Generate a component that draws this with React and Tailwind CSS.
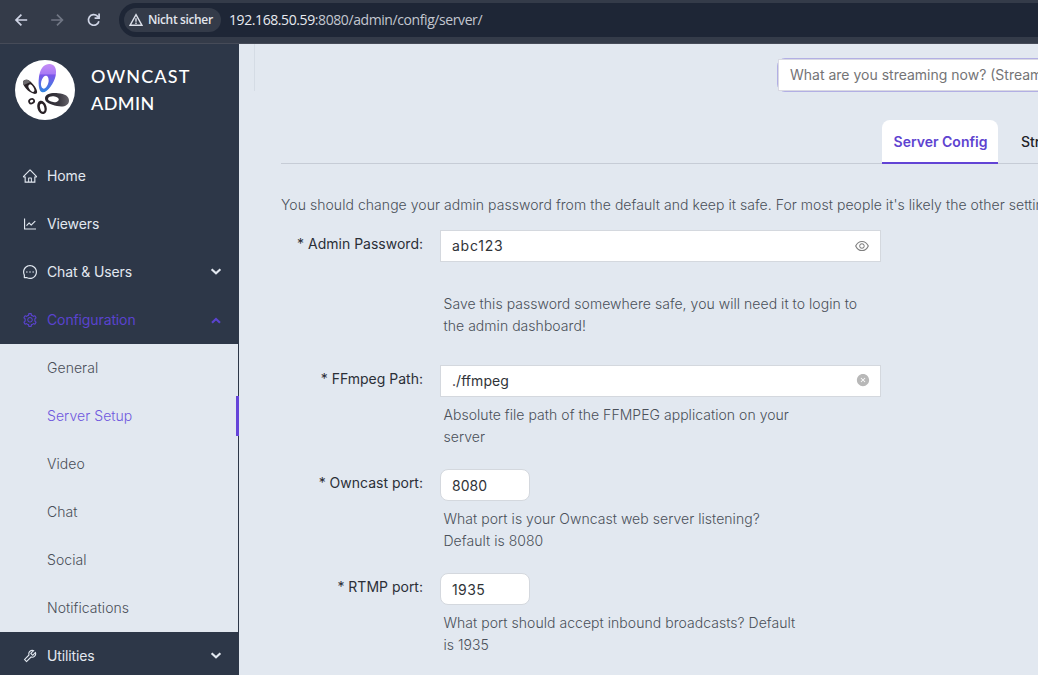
import {
  AiOutlineHome,
  AiOutlineLineChart,
  AiOutlineMessage,
  AiOutlineSetting,
  AiOutlineTool,
  AiOutlineEye,
  AiFillCloseCircle,
} from "react-icons/ai";

function BrowserBar() {
  return (
    <header className="flex h-11 shrink-0 items-start border-b border-[#464b58] bg-[#343b49] pt-[3px]">
      <div className="flex h-[34px] w-[119px] shrink-0 items-center pl-[14px]">
        <svg className="h-4 w-4 shrink-0" viewBox="0 0 16 16" fill="none" stroke="#cfd5e6" strokeWidth="1.7">
          <path d="M13.2 8H2.2M7.4 2.6 2 8l5.4 5.4" />
        </svg>
        <svg className="ml-5 h-4 w-4 shrink-0" viewBox="0 0 16 16" fill="none" stroke="#707684" strokeWidth="1.7">
          <path d="M1.2 8h11M7 2.6 12.4 8 7 13.4" />
        </svg>
        <svg className="ml-5 h-4 w-4 shrink-0" viewBox="0 0 16 16" fill="none" stroke="#cfd5e6" strokeWidth="1.7">
          <path d="M12.9 9.2A5.3 5.3 0 1 1 11.4 4.1L12.6 5.4" />
          <path d="M13.1 1.6v4.5H8.6" />
        </svg>
      </div>
      <div className="flex h-[34px] flex-1 items-center rounded-l-full bg-[#1e2636] pl-[5px]">
        <div className="flex h-6 w-[97px] items-center rounded-full bg-[#343b49] pl-[5px]">
          <svg className="h-[14px] w-[14px] shrink-0" viewBox="0 0 14 14" fill="none" stroke="#dce0ea" strokeWidth="1.4">
            <path d="M7 1.6 13 12.3H1Z" />
            <path d="M7 5.2v3.6M7 9.6v1.4" />
          </svg>
          <span className="ml-[5px] whitespace-nowrap font-['Open_Sans',sans-serif] text-[12px] leading-4 font-semibold tracking-[-0.36px] text-[#e3e6ee]">
            Nicht sicher
          </span>
        </div>
        <span className="ml-2 whitespace-nowrap font-['Open_Sans',sans-serif] text-[14px] leading-5 tracking-[-0.41px] text-[#c3c7d0]">
          <span className="text-[#e8eaf0]">192.168.50.59</span>:8080/admin/config/server/
        </span>
      </div>
    </header>
  );
}

function Logo() {
  return (
    <svg className="h-[60px] w-[60px] shrink-0" viewBox="0 0 60 60">
      <defs>
        <linearGradient id="petal" x1="0" y1="0" x2="0" y2="1">
          <stop offset="0" stopColor="#c58cf6" />
          <stop offset=".36" stopColor="#a87af5" />
          <stop offset=".38" stopColor="#7e55ea" />
          <stop offset="1" stopColor="#2f86df" />
        </linearGradient>
        <linearGradient id="ink" x1="0" y1="0" x2="1" y2="0">
          <stop offset="0" stopColor="#25222a" />
          <stop offset=".6" stopColor="#3d3b43" />
          <stop offset="1" stopColor="#66646b" />
        </linearGradient>
      </defs>
      <circle cx="30" cy="30" r="30" fill="#fff" />
      <path d="M27.5 32.3C23.4 32 22.8 22 24.5 14C26.2 7 30 3.6 35 4C40.6 4.6 42 10 40.6 16C39 23 32.5 32.8 27.5 32.3Z" fill="url(#petal)" />
      <ellipse cx="29.8" cy="22.2" rx="3.6" ry="6.6" transform="rotate(14 29.8 22.2)" fill="#fff" />
      <path d="M21.5 33.5C18 35.6 9.4 29 8 23.6C7.4 20.6 10 18.9 13 20C17.6 22 24.4 31.8 21.5 33.5Z" fill="#292126" />
      <path d="M8 23.6C7.4 20.6 10 18.9 13 20L15.5 22L8.8 25Z" fill="#6c696c" />
      <ellipse cx="16.4" cy="28.2" rx="2.2" ry="4.2" transform="rotate(-32 16.4 28.2)" fill="#fff" />
      <path d="M30 38.5C30 34 36 32.6 43 33.2C50 33.6 54.4 36.5 54 41C53.6 45.7 48.6 47.4 42 46C35.5 44.6 30 42.5 30 38.5Z" fill="url(#ink)" />
      <ellipse cx="38.4" cy="39.2" rx="5.4" ry="2.9" transform="rotate(6 38.4 39.2)" fill="#fff" />
      <ellipse cx="27" cy="47.4" rx="4.6" ry="6.8" transform="rotate(-16 27 47.4)" fill="#292126" />
      <ellipse cx="27.2" cy="47.8" rx="2.1" ry="4.1" transform="rotate(-14 27.2 47.8)" fill="#fff" />
      <ellipse cx="16.6" cy="41.2" rx="2.6" ry="2.2" transform="rotate(-30 16.6 41.2)" fill="#fff" stroke="#292126" strokeWidth="1.7" />
    </svg>
  );
}

function Arrow({ up }) {
  return (
    <svg className="ml-auto h-3 w-3 shrink-0" viewBox="0 0 12 12" fill="none" stroke="currentColor" strokeWidth="2.2">
      <path d={up ? "M2 8.8 6 5l4 3.8" : "M1.6 3.2 6 7.2l4.4-4"} />
    </svg>
  );
}

function MenuItem({ icon: Icon, label, arrow, active }) {
  return (
    <div className={"flex h-12 items-center pr-[17px] pl-[22px] " + (active ? "text-[#5a43cf]" : "text-[#e2e8f0]")}>
      <Icon className="h-4 w-4 shrink-0" />
      <span className="ml-[9px] pb-[2px] text-[14px] tracking-[-0.12px]">{label}</span>
      {arrow && <Arrow up={arrow === "up"} />}
    </div>
  );
}

function SubItem({ label, active }) {
  return (
    <div className={"flex h-12 items-center justify-between pl-[47px] text-[14px] font-light " + (active ? "text-[#6f58de]" : "text-[#4a4f58]")}>
      <span className="pb-[2px] tracking-[0.06px]">{label}</span>
      {active && <span className="-mr-px h-10 w-[3px] bg-[#6544d9]" />}
    </div>
  );
}

function Sidebar() {
  return (
    <aside className="flex w-[239px] shrink-0 flex-col bg-[#2d3748]">
      <div className="flex h-[108px] shrink-0 items-start pt-4 pl-[15px]">
        <Logo />
        <h1 className="ml-4 flex flex-col pt-[3px] font-['Lato',sans-serif] text-[18px] leading-[27px] font-medium text-white">
          <span className="tracking-[1.15px]">OWNCAST</span>
          <span className="tracking-[0.4px]">ADMIN</span>
        </h1>
      </div>
      <nav className="flex flex-col">
        <MenuItem icon={AiOutlineHome} label="Home" />
        <MenuItem icon={AiOutlineLineChart} label="Viewers" />
        <MenuItem icon={AiOutlineMessage} label="Chat & Users" arrow="down" />
        <MenuItem icon={AiOutlineSetting} label="Configuration" arrow="up" active />
        <div className="mr-px bg-[#e2e8f0]">
          <SubItem label="General" />
          <SubItem label="Server Setup" active />
          <SubItem label="Video" />
          <SubItem label="Chat" />
          <SubItem label="Social" />
          <SubItem label="Notifications" />
        </div>
        <MenuItem icon={AiOutlineTool} label="Utilities" arrow="down" />
      </nav>
    </aside>
  );
}

function Field({ label, value, icon, small, help, gap, height, spacing }) {
  return (
    <div className={"flex shrink-0 items-start " + height}>
      <label className="mr-[17px] w-[142px] pt-[3px] text-right text-[14px] leading-[22px] whitespace-nowrap text-[#2b2f37]">
        * {label}:
      </label>
      <div>
        <div
          className={
            "flex h-8 items-center justify-between border border-[#d4d8de] bg-white pr-[10px] pl-[11px] text-[14px] text-[#303338] " +
            (small ? "w-[90px] rounded-[8px]" : "w-[441px]")
          }
        >
          <span className={spacing + (small ? "" : " pb-[2px]")}>{value}</span>
          {icon}
        </div>
        <p className={"pl-[3.5px] text-[14px] leading-[22px] font-light tracking-[0.04px] whitespace-nowrap text-[#4a5059] " + gap}>
          {help[0]}
          <br />
          {help[1]}
        </p>
      </div>
    </div>
  );
}

function Main() {
  return (
    <main className="flex min-w-0 flex-1 flex-col overflow-hidden bg-[#e2e8f0]">
      <div className="flex h-12 shrink-0">
        <div className="ml-[15px] h-[47px] w-px shrink-0 bg-[#d5dce5]" />
        <div className="mt-[14px] ml-[522px] h-[34px] w-[360px] shrink-0 rounded-lg border border-[#b2afe4]">
          <div className="flex h-8 items-center border border-[#d9d9e3] bg-white pl-[11px] text-[14px] whitespace-nowrap text-[#747476]">
            <span className="pb-px">What are you streaming now? (Stream title)</span>
          </div>
        </div>
      </div>
      <div className="mt-7 ml-[42px] flex h-11 shrink-0 border-b border-[#c6ccd6] pl-[601px]">
        <div className="flex h-11 w-[116px] shrink-0 items-center justify-center rounded-t-[8px] border-b-2 border-[#6244d5] bg-white pl-px text-[14px] font-semibold text-[#5e43d0]">
          Server Config
        </div>
        <div className="ml-[23px] flex h-11 items-center pb-[2px] text-[14px] font-medium whitespace-nowrap text-[#1f2329]">
          Stream Keys
        </div>
      </div>
      <p className="mt-[30px] ml-[42px] h-9 shrink-0 text-[14px] leading-[22px] font-light tracking-[0.05px] whitespace-nowrap text-[#4a5059]">
        You should change your admin password from the default and keep it safe. For most people it's likely the other settings
      </p>
      <section className="ml-[42px] flex flex-col">
        <Field
          label="Admin Password"
          value="abc123"
          spacing="tracking-[0.75px]"
          height="h-[135px]"
          gap="mt-[31px]"
          icon={<AiOutlineEye className="h-4 w-4 text-[#808080]" />}
          help={["Save this password somewhere safe, you will need it to login to", "the admin dashboard!"]}
        />
        <Field
          label="FFmpeg Path"
          value="./ffmpeg"
          spacing="tracking-[0.05px]"
          height="h-[104px]"
          gap="mt-[7px]"
          icon={<AiFillCloseCircle className="mb-[2px] h-[14px] w-[14px] text-[#b8b8b8]" />}
          help={["Absolute file path of the FFMPEG application on your", "server"]}
        />
        <Field
          label="Owncast port"
          value="8080"
          spacing="tracking-[0.05px]"
          height="h-[104px]"
          gap="mt-[7px]"
          small
          help={["What port is your Owncast web server listening?", "Default is 8080"]}
        />
        <Field
          label="RTMP port"
          value="1935"
          spacing="tracking-[0.4px]"
          height="h-[104px]"
          gap="mt-[7px]"
          small
          help={["What port should accept inbound broadcasts? Default", "is 1935"]}
        />
      </section>
    </main>
  );
}

export default function App() {
  return (
    <div className="flex h-screen w-screen flex-col overflow-hidden font-['Inter',sans-serif]">
      <BrowserBar />
      <div className="flex min-h-0 flex-1 overflow-hidden">
        <Sidebar />
        <Main />
      </div>
    </div>
  );
}
